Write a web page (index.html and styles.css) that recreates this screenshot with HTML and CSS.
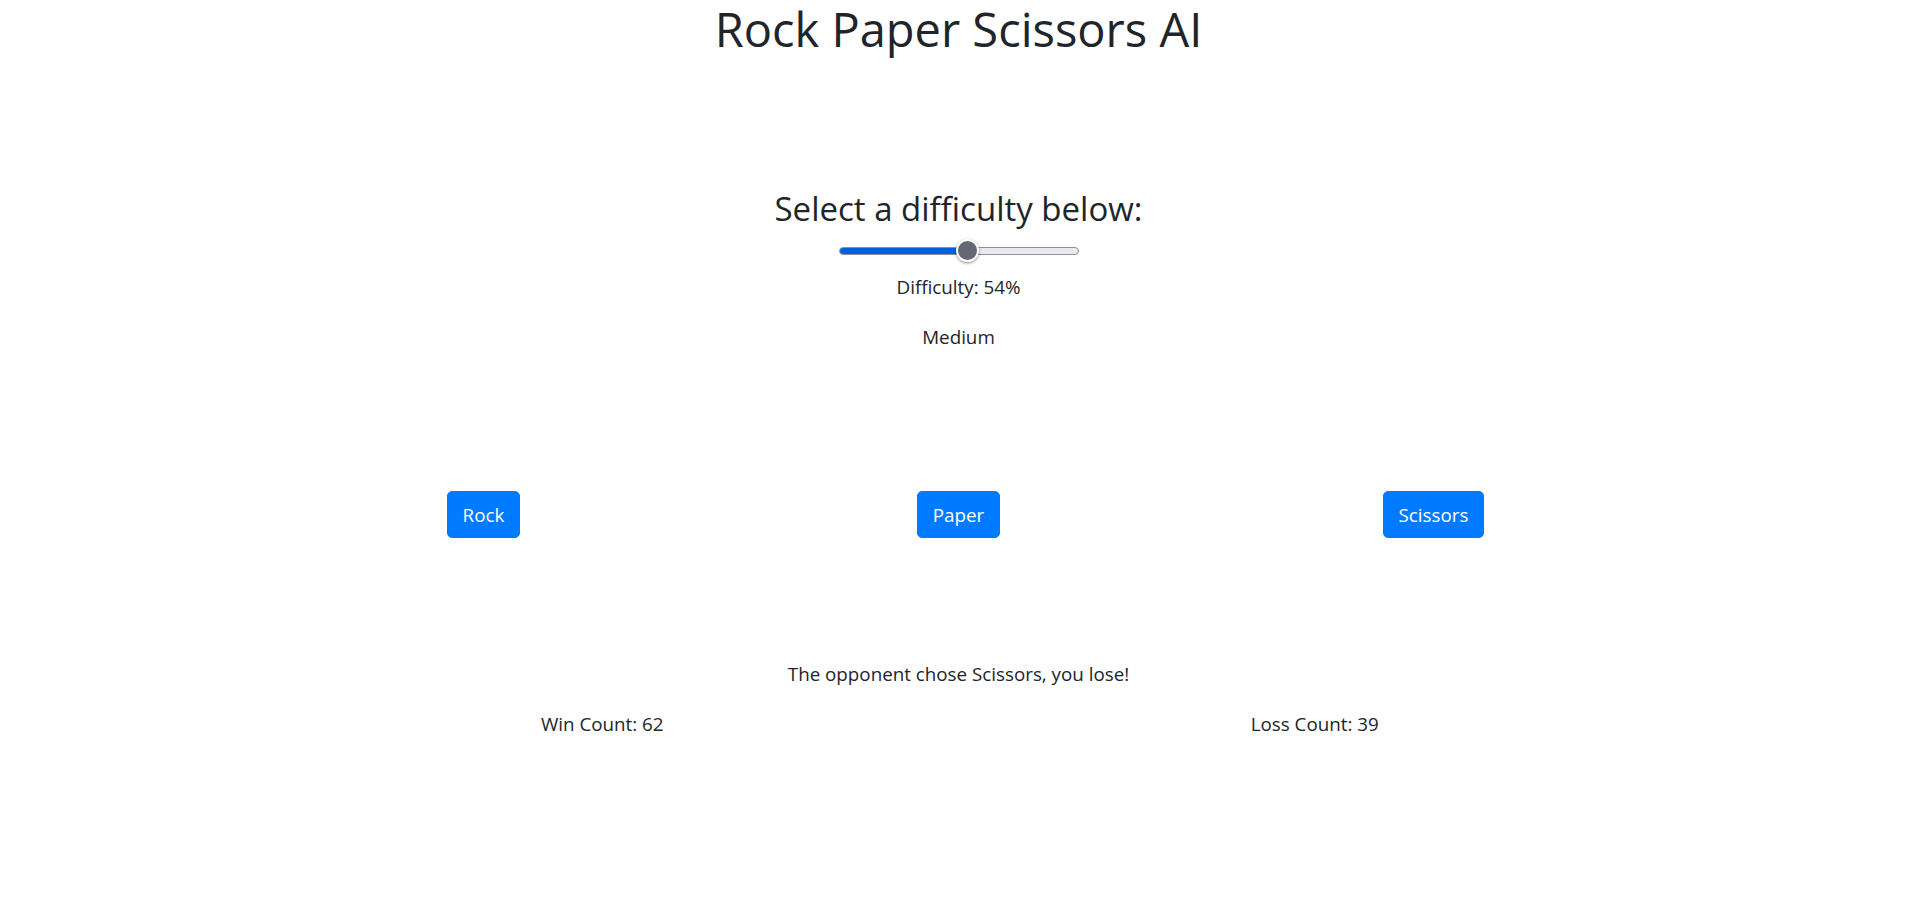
FILE: index.html
```html
<!DOCTYPE html>
<html lang="en">
<head>
<meta charset="utf-8">
<title>Rock Paper Scissors AI</title>
<link rel="stylesheet" href="styles.css">
</head>
<body>
  <h1 class="title">Rock Paper Scissors AI</h1>
  <section class="difficulty">
    <h3 class="subtitle">Select a difficulty below:</h3>
    <div class="slider">
      <div class="track"><div class="fill" style="width:53.3%"></div></div>
      <div class="thumb" style="left:calc((100% - 23px) * 0.54)"></div>
    </div>
    <p class="line">Difficulty: 54%</p>
    <p class="line">Medium</p>
  </section>
  <div class="container">
    <div class="row three">
      <div class="col"><button class="btn">Rock</button></div>
      <div class="col"><button class="btn">Paper</button></div>
      <div class="col"><button class="btn">Scissors</button></div>
    </div>
    <p class="line status">The opponent chose Scissors, you lose!</p>
    <div class="row two">
      <div class="col"><p class="line">Win Count: 62</p></div>
      <div class="col"><p class="line">Loss Count: 39</p></div>
    </div>
  </div>
</body>
</html>
```

FILE: styles.css
```css
* { box-sizing: border-box; }
html, body { margin: 0; padding: 0; background: #fff; }
body {
  font-family: "Open Sans", "Noto Sans", sans-serif;
  font-size: 18.8px;
  line-height: 30px;
  color: #212529;
  text-align: center;
}
.title {
  margin: 0;
  padding-top: 1px;
  font-size: 47px;
  line-height: 57.5px;
  font-weight: 400;
}
.difficulty {
  display: flex;
  flex-direction: column;
  align-items: center;
  padding-top: 129.7px;
}
.subtitle {
  margin: 0;
  font-size: 33px;
  line-height: 42px;
  font-weight: 400;
}
.slider {
  position: relative;
  width: 240px;
  height: 24px;
  margin-top: 8.8px;
  margin-bottom: 8.7px;
  display: flex;
  align-items: center;
}
.track {
  width: 100%;
  height: 8px;
  border: 1px solid #8f8f9d;
  border-radius: 4px;
  background: #e9e9ed;
  display: flex;
  overflow: hidden;
}
.fill {
  background: #0060df;
  margin: -1px 0 -1px -1px;
  border-radius: 4px 0 0 4px;
}
.thumb {
  position: absolute;
  top: 0.5px;
  width: 23px;
  height: 23px;
  border-radius: 50%;
  background: #676774;
  border: 2px solid #fff;
  box-shadow: 0 1px 3px rgba(0,0,0,0.45);
}
.line {
  margin: 0 0 20px;
}
.container {
  width: 1425px;
  margin: 0 auto;
  padding-top: 119.3px;
}
.row {
  display: grid;
}
.row.three { grid-template-columns: repeat(3, 1fr); }
.row.two { grid-template-columns: repeat(2, 1fr); }
.btn {
  font-family: inherit;
  font-size: 18.8px;
  line-height: 30px;
  color: #fff;
  background: #007bff;
  border: 1.25px solid #007bff;
  border-radius: 5px;
  padding: 8px 15px 7px;
  cursor: pointer;
}
.status {
  margin-top: 121px;
}
```
